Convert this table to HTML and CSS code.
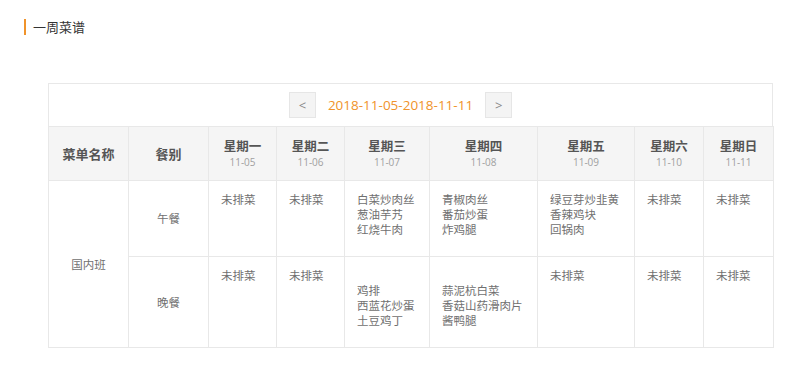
FILE: index.html
```
<!DOCTYPE html>
<html lang="zh-CN">
<head>
<meta charset="utf-8">
<title>一周菜谱</title>
<link rel="stylesheet" href="styles.css">
</head>
<body>
<div class="page">
  <h1 class="title">一周菜谱</h1>
  <div class="panel">
    <div class="nav">
      <button class="nav-btn" type="button">&lt;</button>
      <span class="range">2018-11-05-2018-11-11</span>
      <button class="nav-btn" type="button">&gt;</button>
    </div>
    <table class="menu">
      <colgroup>
        <col class="c-name"><col class="c-meal"><col class="c-d1"><col class="c-d2"><col class="c-d3"><col class="c-d4"><col class="c-d5"><col class="c-d6"><col class="c-d7">
      </colgroup>
      <thead>
        <tr>
          <th class="big">菜单名称</th>
          <th class="big">餐别</th>
          <th><div class="day">星期一</div><div class="date">11-05</div></th>
          <th><div class="day">星期二</div><div class="date">11-06</div></th>
          <th><div class="day">星期三</div><div class="date">11-07</div></th>
          <th><div class="day">星期四</div><div class="date">11-08</div></th>
          <th><div class="day">星期五</div><div class="date">11-09</div></th>
          <th><div class="day">星期六</div><div class="date">11-10</div></th>
          <th><div class="day">星期日</div><div class="date">11-11</div></th>
        </tr>
      </thead>
      <tbody>
        <tr class="r1">
          <td class="mid" rowspan="2">国内班</td>
          <td class="mid">午餐</td>
          <td><div>未排菜</div></td>
          <td><div>未排菜</div></td>
          <td><div>白菜炒肉丝</div><div>葱油芋艿</div><div>红烧牛肉</div></td>
          <td><div>青椒肉丝</div><div>番茄炒蛋</div><div>炸鸡腿</div></td>
          <td><div>绿豆芽炒韭黄</div><div>香辣鸡块</div><div>回锅肉</div></td>
          <td><div>未排菜</div></td>
          <td><div>未排菜</div></td>
        </tr>
        <tr class="r2">
          <td class="mid">晚餐</td>
          <td><div>未排菜</div></td>
          <td><div>未排菜</div></td>
          <td><div class="blank"></div><div>鸡排</div><div>西蓝花炒蛋</div><div>土豆鸡丁</div></td>
          <td><div class="blank"></div><div>蒜泥杭白菜</div><div>香菇山药滑肉片</div><div>酱鸭腿</div></td>
          <td><div>未排菜</div></td>
          <td><div>未排菜</div></td>
          <td><div>未排菜</div></td>
        </tr>
      </tbody>
    </table>
  </div>
</div>
</body>
</html>
```
FILE: styles.css
```
* { box-sizing: border-box; }
html, body { margin: 0; padding: 0; background: #fff; }
body {
  font-family: "Open Sans", "Noto Sans CJK SC", sans-serif;
  color: #333;
}
.page { padding: 19px 25px 0 24px; }
.title {
  margin: 0;
  font-family: "Noto Sans CJK SC", sans-serif;
  font-weight: normal;
  font-size: 13px;
  line-height: 16px;
  color: #333;
  border-left: 2px solid #f0932b;
  padding-left: 7px;
}
.panel { margin: 48px 0 0 24px; width: 725px; }
.nav {
  height: 43px;
  border: 1px solid #e8e8e8;
  border-bottom: none;
  display: flex;
  align-items: center;
  justify-content: center;
  padding-right: 20px;
}
.nav-btn {
  width: 27px;
  height: 26px;
  padding: 0;
  margin: 0;
  border: 1px solid #e6e6e6;
  background: #f4f4f4;
  color: #888;
  font-family: "Open Sans", sans-serif;
  font-size: 13px;
  line-height: 24px;
}
.range {
  margin: 0 12px 0 12px;
  color: #f0932b;
  font-size: 13.5px;
  line-height: 20px;
}
.menu {
  width: 725px;
  table-layout: fixed;
  border-collapse: collapse;
  font-family: "Noto Sans CJK SC", sans-serif;
}
.c-name { width: 80px; }
.c-meal { width: 80px; }
.c-d1 { width: 68px; }
.c-d2 { width: 68px; }
.c-d3 { width: 85px; }
.c-d4 { width: 108px; }
.c-d5 { width: 97px; }
.c-d6 { width: 69px; }
.c-d7 { width: 70px; }
.menu th, .menu td { border: 1px solid #e8e8e8; }
.menu th {
  background: #f5f5f5;
  height: 54px;
  padding: 0;
  text-align: center;
  vertical-align: middle;
  color: #555;
  font-weight: bold;
}
.menu th.big { font-size: 13px; }
.day { font-size: 12.5px; line-height: 17px; }
.date {
  font-family: "Open Sans", sans-serif;
  font-weight: normal;
  font-size: 10px;
  line-height: 17px;
  color: #a0a0a0;
}
.menu td {
  vertical-align: top;
  padding: 11px 8px 19px 12px;
  font-size: 11.5px;
  line-height: 15px;
  color: #707070;
  white-space: nowrap;
}
.menu td.mid {
  vertical-align: middle;
  text-align: center;
  padding: 0;
}
.blank { height: 15px; }
.r1 td { height: 76px; }
.r2 td { height: 89px; }
```
